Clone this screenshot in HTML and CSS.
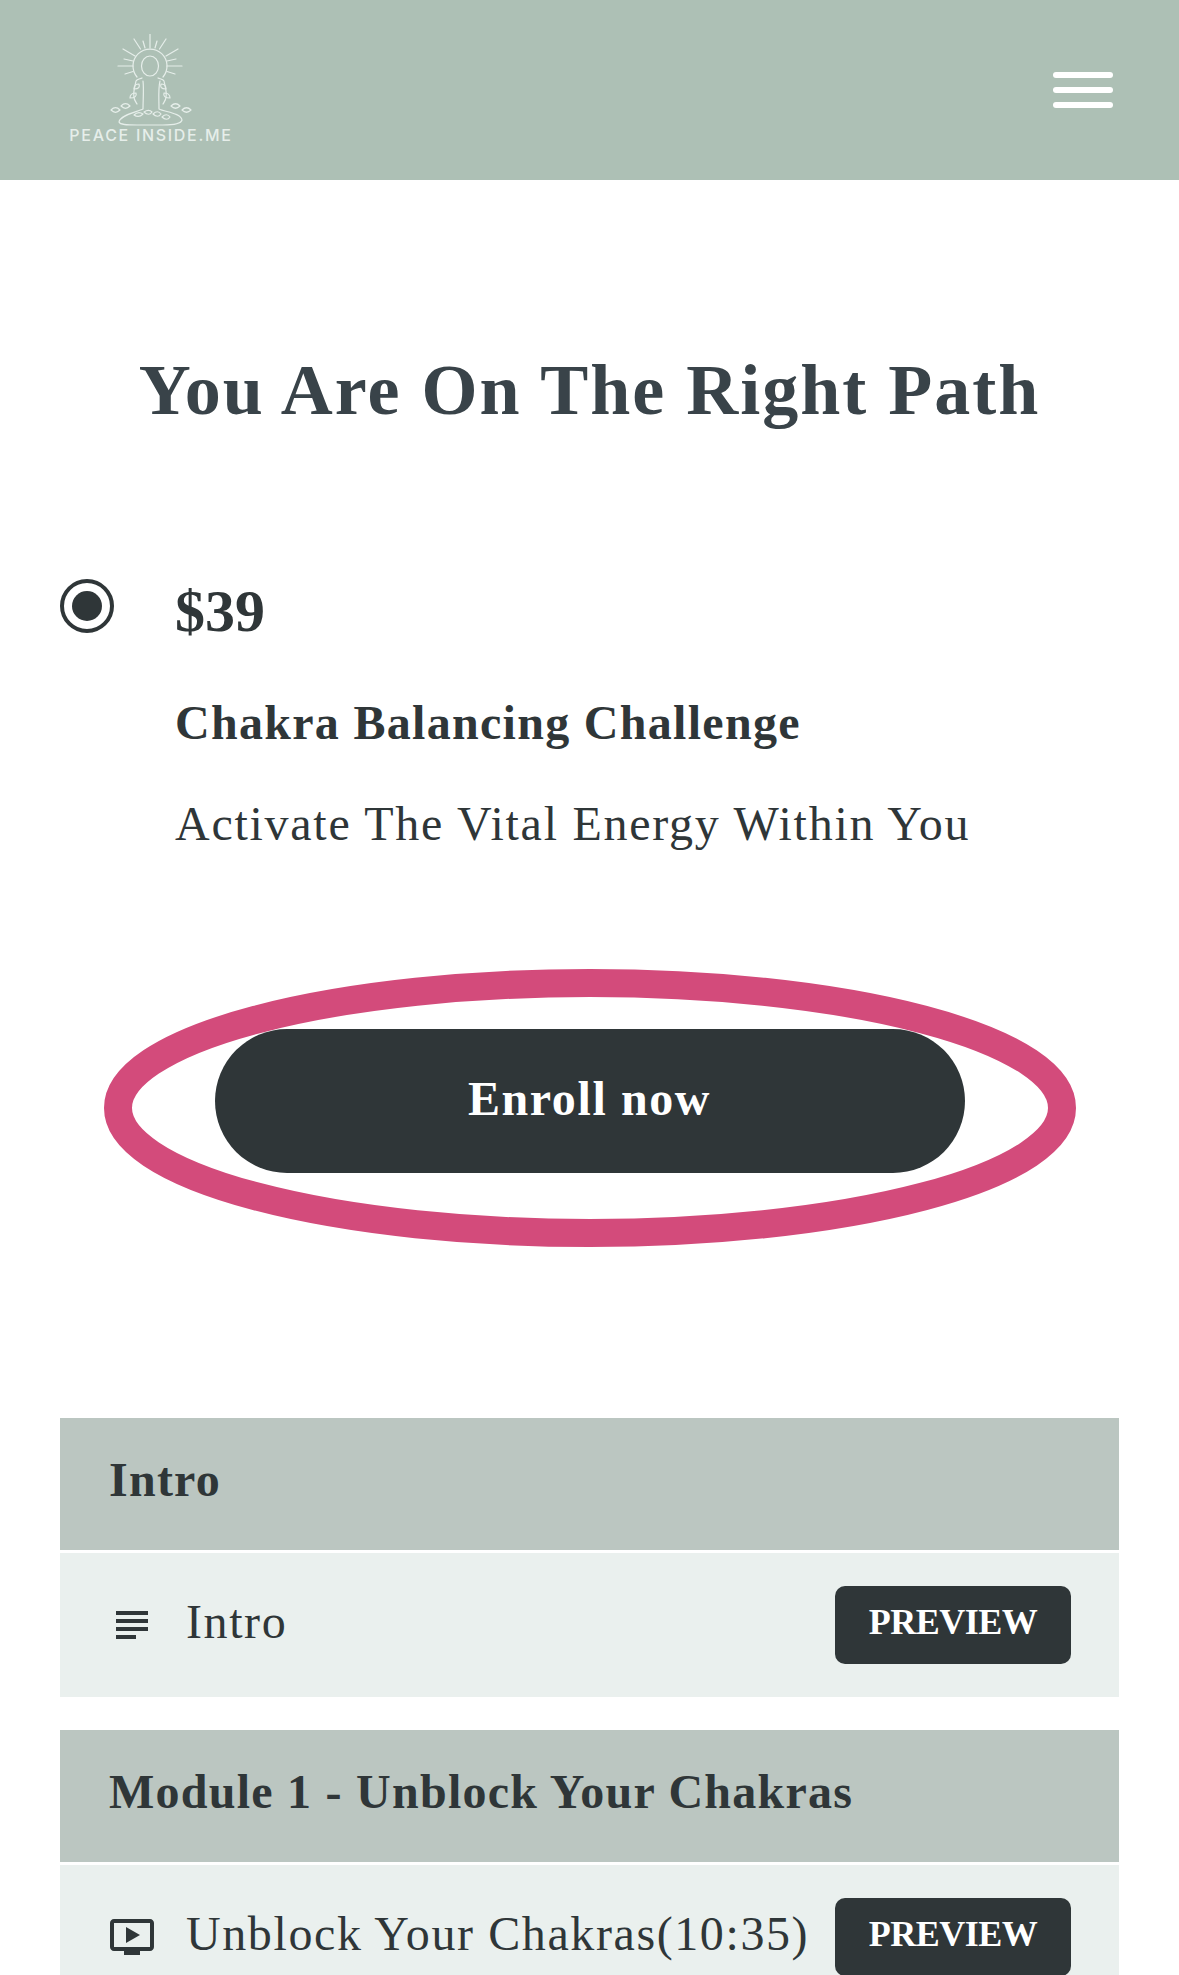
FILE: index.html
```html
<!DOCTYPE html>
<html lang="en">
<head>
  <meta charset="UTF-8" />
  <title>You Are On The Right Path</title>
  <link rel="stylesheet" href="styles.css">
</head>
<body>
  <header class="topbar">
    <a class="logo" href="#">
      <svg class="logo-mark" viewBox="0 0 82 94" fill="none" stroke="currentColor" stroke-width="1.2" stroke-linecap="round" stroke-linejoin="round">
        <!-- sun rays -->
        <path d="M40 0v14M24 5l6.500 10M56 5l-6.500 10M13 15l12 7M68 15l-12 7M8 32h15M72 32H57M14 25l9 2M66 25l-9 2M15 40l8-2.500M65 40l-8-2.500M33 7l2 7M47 7l-2 7"/>
        <!-- halo and head -->
        <path d="M27 43a17 17 0 1 1 26 0"/>
        <ellipse cx="40" cy="32" rx="8.500" ry="10"/>
        <!-- seated body -->
        <path d="M32 44c-2 1-5 1-6 3-1 5-3 10-2 16 0 3 2 5 3 7M48 44c2 1 5 1 6 3 1 5 3 10 2 16 0 3-2 5-3 7"/>
        <path d="M33 47c1 8 0 19 0 28-6 3-23 6-24 13 1 3 8 3 18 3h26c8 0 18-1 19-5-1-7-17-8-23-11 0-9-1-20 1-28"/>
        <!-- leaves -->
        <path d="M1 76c3-3 6-3 9 0-3 3-6 3-9 0zM11 72c3-3 6-3 9 0-3 3-6 3-9 0zM20 64c0-4 2-5 6-5 1 3-1 5-6 5zM24 55c0-3 2-5 5-5 1 3 0 5-5 5zM81 76c-3-3-6-3-9 0 3 3 6 3 9 0zM70 72c-3-3-6-3-9 0 3 3 6 3 9 0zM60 64c0-4-2-5-6-5-1 3 1 5 6 5zM56 55c0-3-2-5-5-5-1 3 0 5 5 5zM24 81c3-3 6-3 9-1-3 3-6 3-9 1zM34 78c3-2 6-2 8 0-2 3-5 3-8 0zM43 80c3-3 6-3 8 0-2 3-5 3-8 0zM52 83c3-3 6-3 8 0-2 3-5 3-8 0z"/>
      </svg>
      <span class="logo-text">PEACE INSIDE.ME</span>
    </a>
    <button class="menu-toggle" aria-label="Menu">
      <span></span>
      <span></span>
      <span></span>
    </button>
  </header>

  <main class="content">
    <h1 class="page-title">You Are On The Right Path</h1>

    <section class="plan">
      <span class="radio"><span class="radio-dot"></span></span>
      <div class="plan-info">
        <div class="price">$39</div>
        <div class="plan-name">Chakra Balancing Challenge</div>
        <div class="plan-sub">Activate The Vital Energy Within You</div>
      </div>
    </section>

    <div class="enroll">
      <a class="enroll-btn" href="#">Enroll now</a>
      <svg class="enroll-ring" viewBox="0 0 972 278" fill="none">
        <ellipse cx="486" cy="139" rx="472" ry="125" stroke="#d34b7b" stroke-width="28"/>
      </svg>
    </div>

    <section class="module">
      <h2 class="module-title">Intro</h2>
      <div class="lesson">
        <svg class="lesson-icon" viewBox="0 0 24 24"><path d="M14 17H4v2h10v-2zm6-8H4v2h16V9zM4 15h16v-2H4v2zM4 5v2h16V5H4z"/></svg>
        <span class="lesson-name">Intro</span>
        <a class="preview" href="#">PREVIEW</a>
      </div>
    </section>

    <section class="module">
      <h2 class="module-title">Module 1 - Unblock Your Chakras</h2>
      <div class="lesson">
        <svg class="lesson-icon" viewBox="0 0 24 24"><path d="M21 3H3c-1.11 0-2 .89-2 2v12c0 1.1.89 2 2 2h5v2h8v-2h5c1.1 0 1.99-.9 1.99-2L23 5c0-1.11-.9-2-2-2zm0 14H3V5h18v12zm-5-6l-7 4V7z"/></svg>
        <span class="lesson-name">Unblock Your Chakras(10:35)</span>
        <a class="preview" href="#">PREVIEW</a>
      </div>
    </section>
  </main>
</body>
</html>
```

FILE: styles.css
```css
html, body {
  height: 1975px;
  overflow: hidden;
}

body {
  margin: 0;
  font-family: "Liberation Serif", serif;
  background-color: #fff;
  color: #2f3638;
}

a {
  text-decoration: none;
}

.topbar {
  height: 180px;
  background-color: #adc0b5;
  display: flex;
  align-items: center;
  justify-content: space-between;
  padding: 0 66px 0 70px;
}

.logo {
  width: 162px;
  padding-bottom: 3px;
  display: flex;
  flex-direction: column;
  align-items: center;
  color: #e6eeea;
}

.logo-mark {
  width: 82px;
  height: 94px;
}

.logo-text {
  margin-top: -1px;
  font-family: "Inter", sans-serif;
  font-size: 16px;
  line-height: 16px;
  font-weight: 500;
  letter-spacing: 1.7px;
  white-space: nowrap;
}

.menu-toggle {
  display: flex;
  flex-direction: column;
  gap: 9px;
  width: 60px;
  padding: 0;
  border: 0;
  background: none;
}

.menu-toggle span {
  height: 6px;
  border-radius: 3px;
  background-color: #fff;
}

.content {
  padding: 0 60px;
}

.page-title {
  margin: 166px 0 0;
  font-size: 72px;
  line-height: 88px;
  font-weight: bold;
  text-align: center;
  color: #394349;
  letter-spacing: 2px;
}

.plan {
  display: flex;
  margin-top: 145px;
}

.radio {
  flex: none;
  width: 54px;
  height: 54px;
  box-sizing: border-box;
  border: 4px solid #2f3638;
  border-radius: 50%;
  display: flex;
  align-items: center;
  justify-content: center;
}

.radio-dot {
  width: 30px;
  height: 30px;
  border-radius: 50%;
  background-color: #2f3638;
}

.plan-info {
  margin-left: 61px;
}

.price {
  margin-top: -3px;
  font-size: 60px;
  line-height: 70px;
  font-weight: bold;
}

.plan-name {
  margin-top: 49px;
  font-size: 48px;
  line-height: 56px;
  font-weight: bold;
  letter-spacing: 1.3px;
}

.plan-sub {
  margin-top: 45px;
  font-size: 48px;
  line-height: 56px;
  letter-spacing: 1.73px;
}

.enroll {
  position: relative;
  display: flex;
  justify-content: center;
  margin-top: 177px;
}

.enroll-btn {
  width: 750px;
  height: 144px;
  border-radius: 72px;
  background-color: #2f3638;
  color: #fff;
  font-size: 48px;
  line-height: 140px;
  font-weight: bold;
  text-align: center;
  letter-spacing: 1.6px;
}

.enroll-ring {
  position: absolute;
  left: 44px;
  top: -60px;
  width: 972px;
  height: 278px;
}

.module {
  margin-top: 33px;
}

.enroll + .module {
  margin-top: 245px;
}

.module-title {
  margin: 0;
  height: 132px;
  padding-left: 49px;
  background-color: #bbc6c1;
  font-size: 48px;
  line-height: 124px;
  font-weight: bold;
  letter-spacing: 1.25px;
}

.lesson {
  margin-top: 3px;
  height: 144px;
  display: flex;
  align-items: center;
  padding: 0 48px;
  background-color: #eaf0ee;
}

.lesson-icon {
  flex: none;
  width: 48px;
  height: 48px;
  fill: #2f3638;
}

.lesson-name {
  margin-left: 30px;
  font-size: 48px;
  line-height: 56px;
  margin-top: -6px;
  letter-spacing: 1.6px;
  white-space: nowrap;
}

.preview {
  margin-left: auto;
  width: 236px;
  height: 78px;
  border-radius: 10px;
  background-color: #2f3638;
  color: #fff;
  font-size: 36px;
  line-height: 72px;
  font-weight: bold;
  text-align: center;
  letter-spacing: -0.5px;
}
```
